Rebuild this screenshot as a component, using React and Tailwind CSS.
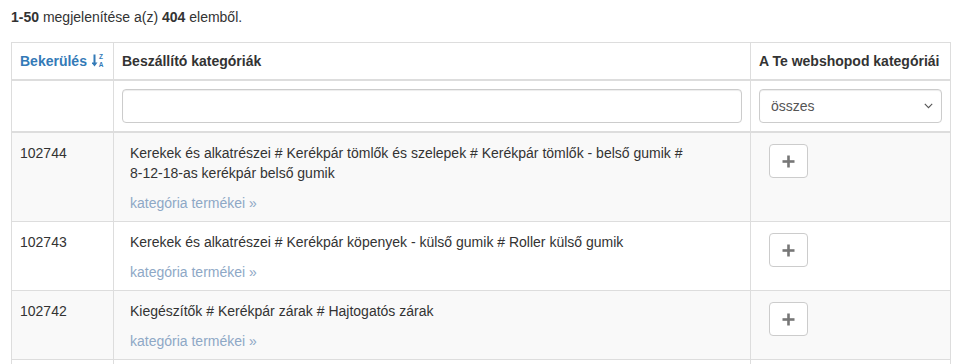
import React from "react";

const rows = [
  {
    id: "102744",
    text: "Kerekek és alkatrészei # Kerékpár tömlők és szelepek # Kerékpár tömlők - belső gumik # 8-12-18-as kerékpár belső gumik",
  },
  {
    id: "102743",
    text: "Kerekek és alkatrészei # Kerékpár köpenyek - külső gumik # Roller külső gumik",
  },
  { id: "102742", text: "Kiegészítők # Kerékpár zárak # Hajtogatós zárak" },
];

function SortIcon() {
  return (
    <svg width="12" height="14" viewBox="0 0 12 14" className="inline-block ml-[5px] -mt-[3px] align-middle">
      <rect x="1.5" y="0.5" width="2" height="10" fill="#337ab7" />
      <polygon points="-0.5,8.5 5.5,8.5 2.5,12.5" fill="#337ab7" />
      <text x="9" y="5.4" fontSize="6.5" fontWeight="700" fill="#337ab7" textAnchor="middle" fontFamily="Liberation Sans, Arial, sans-serif">Z</text>
      <text x="9" y="12.8" fontSize="6.5" fontWeight="700" fill="#337ab7" textAnchor="middle" fontFamily="Liberation Sans, Arial, sans-serif">A</text>
    </svg>
  );
}

function PlusIcon() {
  return (
    <svg width="13" height="13" viewBox="0 0 13 13">
      <rect x="5.2" y="0.5" width="2.6" height="12" fill="#777" />
      <rect x="0.5" y="5.2" width="12" height="2.6" fill="#777" />
    </svg>
  );
}

export default function App() {
  return (
    <div
      className="bg-white text-[14px] leading-5 text-[#333] pl-[11px] pr-[10px] pt-[7px]"
      style={{ fontFamily: '"Liberation Sans", Arial, Helvetica, sans-serif' }}
    >
      <div className="mb-[15px]">
        <b>1-50</b> megjelenítése a(z) <b>404</b> elemből.
      </div>
      <table className="w-full table-fixed border-collapse border border-[#ddd]">
        <thead>
          <tr>
            <th className="w-[102px] whitespace-nowrap border border-b-2 border-[#ddd] p-2 text-left font-bold">
              <span className="text-[#337ab7]">Bekerülés</span>
              <SortIcon />
            </th>
            <th className="border border-b-2 border-[#ddd] p-2 text-left font-bold">Beszállító kategóriák</th>
            <th className="w-[200px] whitespace-nowrap border border-b-2 border-[#ddd] p-2 text-left font-bold">A Te webshopod kategóriái</th>
          </tr>
          <tr>
            <td className="border border-b-2 border-[#ddd] p-2"></td>
            <td className="border border-b-2 border-[#ddd] p-2">
              <input
                type="text"
                className="block w-full h-[34px] rounded-[4px] border border-[#ccc] bg-white px-3 shadow-[inset_0_1px_1px_rgba(0,0,0,0.075)] outline-none"
              />
            </td>
            <td className="border border-b-2 border-[#ddd] p-2">
              <div className="flex items-center justify-between h-[34px] rounded-[4px] border border-[#ccc] bg-white pl-[11px] pr-[8px] text-[#555] shadow-[inset_0_1px_1px_rgba(0,0,0,0.075)]">
                <span>összes</span>
                <svg width="9" height="6" viewBox="0 0 9 6">
                  <polyline points="0.8,0.8 4.5,4.6 8.2,0.8" fill="none" stroke="#555" strokeWidth="1.1" />
                </svg>
              </div>
            </td>
          </tr>
        </thead>
        <tbody>
          {rows.map((r, i) => (
            <tr key={r.id} className={i % 2 === 0 ? "bg-[#f9f9f9]" : "bg-white"}>
              <td className="border border-[#ddd] px-2 pt-[10px] pb-2 align-top">{r.id}</td>
              <td className="border border-[#ddd] px-2 pt-[10px] pb-2 align-top">
                <div className="pl-2 pr-12">
                  <p className="mb-[10px]">{r.text}</p>
                  <a className="text-[#8ea8c6]">kategória termékei »</a>
                </div>
              </td>
              <td className="border border-[#ddd] px-2 pt-[10px] pb-2 align-top">
                <button className="ml-[10px] mt-[1px] flex h-[34px] w-[39px] items-center justify-center rounded-[4px] border border-[#ccc] bg-white">
                  <PlusIcon />
                </button>
              </td>
            </tr>
          ))}
          <tr className="bg-white">
            <td className="h-[20px] border border-[#ddd]"></td>
            <td className="h-[20px] border border-[#ddd]"></td>
            <td className="h-[20px] border border-[#ddd]"></td>
          </tr>
        </tbody>
      </table>
    </div>
  );
}
